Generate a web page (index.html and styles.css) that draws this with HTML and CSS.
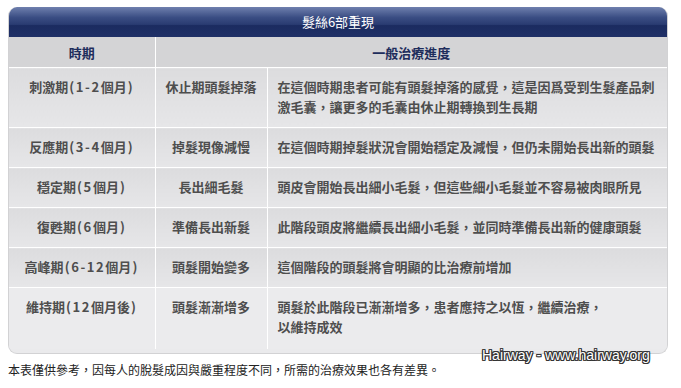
FILE: index.html
```html
<!DOCTYPE html>
<html lang="zh-Hant">
<head>
<meta charset="utf-8">
<title>髮絲6部重現</title>
<link rel="stylesheet" href="styles.css">
</head>
<body>
<div class="wrap">
  <div class="panel">
    <div class="title">髮絲6部重現</div>
    <table class="grid">
      <colgroup><col class="c1"><col class="c2"><col class="c3"></colgroup>
      <thead>
        <tr><th>時期</th><th colspan="2">一般治療進度</th></tr>
      </thead>
      <tbody>
        <tr><td class="ctr">刺激期<span class="lat">(1-2</span>個月<span class="lat">)</span></td><td class="ctr">休止期頭髮掉落</td><td>在這個時期患者可能有頭髮掉落的感覺，這是因爲受到生髮產品刺激毛囊，讓更多的毛囊由休止期轉換到生長期</td></tr>
        <tr><td class="ctr">反應期<span class="lat">(3-4</span>個月<span class="lat">)</span></td><td class="ctr">掉髮現像減慢</td><td>在這個時期掉髮狀況會開始穩定及減慢，但仍未開始長出新的頭髮</td></tr>
        <tr><td class="ctr">穩定期<span class="lat">(5</span>個月<span class="lat">)</span></td><td class="ctr">長出細毛髮</td><td>頭皮會開始長出細小毛髮，但這些細小毛髮並不容易被肉眼所見</td></tr>
        <tr><td class="ctr">復甦期<span class="lat">(6</span>個月<span class="lat">)</span></td><td class="ctr">準備長出新髮</td><td>此階段頭皮將繼續長出細小毛髮，並同時準備長出新的健康頭髮</td></tr>
        <tr><td class="ctr">高峰期<span class="lat">(6-12</span>個月<span class="lat">)</span></td><td class="ctr">頭髮開始變多</td><td>這個階段的頭髮將會明顯的比治療前增加</td></tr>
        <tr class="last"><td class="ctr">維持期<span class="lat">(12</span>個月後<span class="lat">)</span></td><td class="ctr">頭髮漸漸增多</td><td>頭髮於此階段已漸漸增多，患者應持之以恆，繼續治療，<br>以維持成效</td></tr>
      </tbody>
    </table>
  </div>
  <div class="mark">Hairway - www.hairway.org</div>
  <p class="note">本表僅供參考，因每人的脫髮成因與嚴重程度不同，所需的治療效果也各有差異。</p>
</div>
</body>
</html>
```
FILE: styles.css
```css
html, body {
  margin: 0;
  padding: 0;
  background: #ffffff;
}
body {
  padding: 7px 8px 0 8px;
  font-family: "Noto Sans CJK TC", "Liberation Sans", sans-serif;
}
.wrap {
  position: relative;
  width: 660px;
}
.panel {
  width: 660px;
  border: 1px solid #d2d2d4;
  border-top: none;
  border-radius: 9px;
  background: #eaeaec;
  overflow: hidden;
  box-sizing: border-box;
  padding-bottom: 4px;
}
.title {
  height: 30px;
  line-height: 29px;
  text-align: center;
  color: #ffffff;
  font-size: 13px;
  background: linear-gradient(to bottom, #6f80ae 0%, #3a4d83 35%, #2a3c72 58%, #1b2b60 62%, #1f3067 100%);
}
.grid {
  width: 100%;
  border-collapse: collapse;
  table-layout: fixed;
}
.c1 { width: 146px; }
.c2 { width: 112px; }
.grid th {
  height: 30px;
  padding: 0;
  font-size: 13px;
  font-weight: bold;
  color: #1e2d5c;
  text-align: center;
  background: #d4d4d6;
  border-right: 1px solid #ffffff;
  border-bottom: 1px solid #ffffff;
}
.grid th:last-child { border-right: none; }
.grid td {
  padding: 9px 10px 10px 10px;
  vertical-align: top;
  font-size: 13px;
  line-height: 20px;
  font-weight: bold;
  color: #4e4e4e;
  background: linear-gradient(to bottom, #dcdcde 0%, #e6e6e8 100%);
  border-right: 1px solid #ffffff;
  border-bottom: 1px solid #ffffff;
}
.grid td:last-child { border-right: none; }
.grid td.ctr {
  text-align: center;
  padding-left: 2px;
  padding-right: 2px;
}
.lat {
  letter-spacing: 1.6px;
  padding-left: 1px;
}
.grid tr.last td {
  border-bottom: none;
  background: #ebebed;
  padding-bottom: 12px;
}
.note {
  margin: 7px 0 0 0;
  font-size: 12px;
  line-height: 18px;
  color: #222222;
}
.mark {
  position: absolute;
  left: 474px;
  top: 340px;
  font-family: "Liberation Sans", Arial, sans-serif;
  font-size: 14px;
  color: #ffffff;
  text-shadow: 1px 0 0 #333, -1px 0 0 #333, 0 1px 0 #333, 0 -1px 0 #333, 1px 1px 0 #333, -1px -1px 0 #333, 1px -1px 0 #333, -1px 1px 0 #333;
}
```
